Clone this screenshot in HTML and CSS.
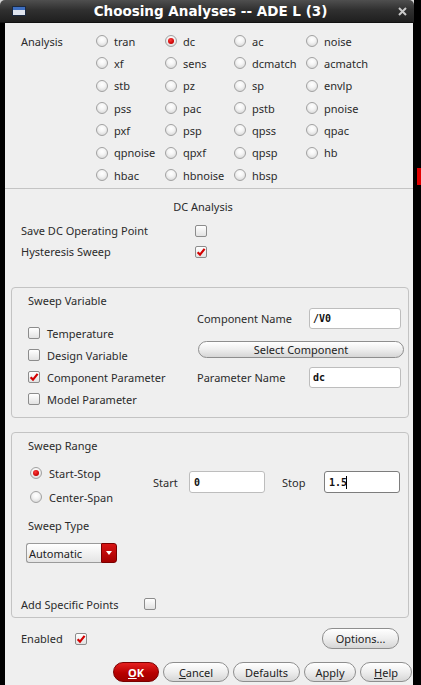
FILE: index.html
```html
<!DOCTYPE html>
<html>
<head>
<meta charset="utf-8">
<link rel="stylesheet" href="styles.css">
</head>
<body>
<div class="screen">
  <div class="title-row">
    <div class="titlebar">
      <span class="win-icon"></span>
      <span class="title">Choosing Analyses -- ADE L (3)</span>
      <svg class="close" width="9" height="9" viewBox="0 0 9 9"><path d="M1 1L8 8M8 1L1 8" stroke="#c9c9c9" stroke-width="2"/></svg>
    </div>
    <div class="title-filler"></div>
  </div>
  <div class="body-row">
    <div class="lstrip"></div>
    <div class="window">
      <div class="analysis">
        <div class="analysis-label">Analysis</div>
        <div class="analysis-grid">
          <label class="radio-item"><span class="radio"></span>tran</label>
          <label class="radio-item"><span class="radio on"></span>dc</label>
          <label class="radio-item"><span class="radio"></span>ac</label>
          <label class="radio-item"><span class="radio"></span>noise</label>
          <label class="radio-item"><span class="radio"></span>xf</label>
          <label class="radio-item"><span class="radio"></span>sens</label>
          <label class="radio-item"><span class="radio"></span>dcmatch</label>
          <label class="radio-item"><span class="radio"></span>acmatch</label>
          <label class="radio-item"><span class="radio"></span>stb</label>
          <label class="radio-item"><span class="radio"></span>pz</label>
          <label class="radio-item"><span class="radio"></span>sp</label>
          <label class="radio-item"><span class="radio"></span>envlp</label>
          <label class="radio-item"><span class="radio"></span>pss</label>
          <label class="radio-item"><span class="radio"></span>pac</label>
          <label class="radio-item"><span class="radio"></span>pstb</label>
          <label class="radio-item"><span class="radio"></span>pnoise</label>
          <label class="radio-item"><span class="radio"></span>pxf</label>
          <label class="radio-item"><span class="radio"></span>psp</label>
          <label class="radio-item"><span class="radio"></span>qpss</label>
          <label class="radio-item"><span class="radio"></span>qpac</label>
          <label class="radio-item"><span class="radio"></span>qpnoise</label>
          <label class="radio-item"><span class="radio"></span>qpxf</label>
          <label class="radio-item"><span class="radio"></span>qpsp</label>
          <label class="radio-item"><span class="radio"></span>hb</label>
          <label class="radio-item"><span class="radio"></span>hbac</label>
          <label class="radio-item"><span class="radio"></span>hbnoise</label>
          <label class="radio-item"><span class="radio"></span>hbsp</label>
        </div>
      </div>
      <div class="sep"></div>
      <div class="dc-title">DC Analysis</div>
      <div class="opt-list">
        <span>Save DC Operating Point</span><span class="cb"></span>
        <span>Hysteresis Sweep</span><span class="cb"><svg viewBox="0 0 10 10"><path d="M1.6 5.2L4 7.6L8.6 1.9" fill="none" stroke="#d40000" stroke-width="2.2"/></svg></span>
      </div>

      <div class="group group-var">
        <div class="gv-left">
          <div class="gtitle">Sweep Variable</div>
          <div class="cb-list">
            <div class="cb-row"><span class="cb"></span>Temperature</div>
            <div class="cb-row"><span class="cb"></span>Design Variable</div>
            <div class="cb-row"><span class="cb"><svg viewBox="0 0 10 10"><path d="M1.6 5.2L4 7.6L8.6 1.9" fill="none" stroke="#d40000" stroke-width="2.2"/></svg></span>Component Parameter</div>
            <div class="cb-row"><span class="cb"></span>Model Parameter</div>
          </div>
        </div>
        <div class="gv-right">
          <div class="field-row"><span class="flabel">Component Name</span><span class="input">/V0</span></div>
          <div class="btn btn-wide">Select Component</div>
          <div class="field-row second"><span class="flabel">Parameter Name</span><span class="input">dc</span></div>
        </div>
      </div>

      <div class="group group-range">
        <div class="gr-title">Sweep Range</div>
        <div class="range-row">
          <div class="radio-col">
            <label class="radio-item"><span class="radio on"></span>Start-Stop</label>
            <label class="radio-item"><span class="radio"></span>Center-Span</label>
          </div>
          <div class="startstop">
            <span class="lbl-start">Start</span>
            <span class="input wide">0</span>
            <span class="lbl-stop">Stop</span>
            <span class="input wide focus">1.5<span class="caret"></span></span>
          </div>
        </div>
        <div class="st-title">Sweep Type</div>
        <div class="combo">
          <span class="combo-main">Automatic</span>
          <span class="combo-arrow"><span class="tri"></span></span>
        </div>
        <div class="add-row"><span>Add Specific Points</span><span class="cb"></span></div>
      </div>

      <div class="enabled-row">
        <span class="en-label">Enabled</span>
        <span class="cb"><svg viewBox="0 0 10 10"><path d="M1.6 5.2L4 7.6L8.6 1.9" fill="none" stroke="#d40000" stroke-width="2.2"/></svg></span>
        <div class="btn btn-options">Options...</div>
      </div>

      <div class="buttons">
        <div class="btn ok"><span class="u">O</span>K</div>
        <div class="btn w-cancel"><span class="u">C</span>ancel</div>
        <div class="btn w-defaults">Defaults</div>
        <div class="btn w-apply">Apply</div>
        <div class="btn w-help"><span class="u">H</span>elp</div>
      </div>
    </div>
    <div class="rstrip"><div class="rmark"></div></div>
  </div>
</div>
</body>
</html>
```

FILE: styles.css
```css
* { box-sizing: border-box; }
html, body { margin: 0; padding: 0; }
body {
  background: #000;
  width: 421px;
  height: 685px;
  overflow: hidden;
  font-family: "Noto Sans", "DejaVu Sans", sans-serif;
  font-size: 11px;
  color: #2b2b2b;
}
.screen { display: flex; flex-direction: column; width: 421px; height: 685px; }

/* title bar */
.title-row { display: flex; height: 23px; background: #d6d6d6; }
.titlebar {
  width: 414px;
  height: 23px;
  display: flex;
  align-items: center;
  padding-left: 12px;
  background: linear-gradient(#4f4f4f, #303030 45%, #1f1f1f);
  border-radius: 5px 5px 0 0;
  border-bottom: 1px solid #111;
}
.win-icon {
  width: 14px;
  height: 10px;
  border: 1px solid #1b2940;
  background: linear-gradient(#3e6fc2 0, #3e6fc2 3px, #dfe4ee 3px);
  flex: none;
}
.title {
  flex: 1;
  text-align: center;
  font-family: "DejaVu Sans", sans-serif;
  font-weight: bold;
  font-size: 13.5px;
  color: #fff;
  padding-right: 3px;
}
.close { flex: none; margin-right: 7px; }
.title-filler { flex: 1; background: #000; }

.body-row { display: flex; flex: 1; }
.lstrip { width: 5px; background: #000; }
.window { width: 408px; background: #efefef; display: flex; flex-direction: column; }
.rstrip { flex: 1; background: #000; padding-top: 145px; }
.rmark { width: 4px; height: 17px; margin-left: 4px; background: #e00000; }

/* analysis radios */
.analysis { display: flex; height: 165px; padding: 7px 0 0 16px; }
.analysis-label { width: 75px; height: 22.33px; display: flex; align-items: center; }
.analysis-grid {
  display: grid;
  grid-template-columns: 69px 69px 72px 1fr;
  grid-auto-rows: 22.33px;
}
.radio-item { display: flex; align-items: center; gap: 6px; white-space: nowrap; }
.radio {
  width: 12px;
  height: 12px;
  flex: none;
  border-radius: 50%;
  border: 1px solid #a2a2a2;
  background: radial-gradient(circle at 50% 35%, #ffffff 0, #f4f4f4 40%, #cfcfcf 100%);
  display: flex;
  align-items: center;
  justify-content: center;
}
.radio.on::after {
  content: "";
  width: 6px;
  height: 6px;
  border-radius: 50%;
  background: radial-gradient(circle at 40% 35%, #ff3a3a, #c40000 70%);
}

.sep { height: 1px; background: #c4c4c4; }
.dc-title { height: 22px; margin-top: 6px; display: flex; align-items: center; justify-content: center; padding-right: 12px; }
.opt-list {
  margin-top: 3px;
  padding-left: 16px;
  display: grid;
  grid-template-columns: 174px 12px;
  grid-auto-rows: 21px;
  align-items: center;
}
.cb {
  width: 12px;
  height: 12px;
  flex: none;
  border: 1px solid #8c8c8c;
  border-radius: 2px;
  background: linear-gradient(#ffffff, #e2e2e2);
  display: flex;
  align-items: center;
  justify-content: center;
}
.cb svg { width: 10px; height: 10px; }

/* groups */
.group { margin: 25px 4px 0 6px; border: 1px solid #c3c3c3; border-radius: 4px; }
.group-var {
  height: 131px;
  display: grid;
  grid-template-columns: 169px 207px;
  padding-left: 16px;
}
.gtitle { margin-top: 5px; height: 16px; line-height: 16px; }
.cb-list { margin-top: 13px; display: flex; flex-direction: column; }
.cb-row { height: 22px; display: flex; align-items: center; gap: 7px; }
.gv-right { padding-top: 20px; display: flex; flex-direction: column; }
.field-row { display: flex; align-items: center; height: 21px; }
.field-row.second { margin-top: 9px; }
.flabel { width: 112px; }
.input {
  width: 92px;
  height: 21px;
  background: #fff;
  border: 1px solid #bdbdbd;
  border-radius: 3px;
  font-family: "DejaVu Sans Mono", monospace;
  font-weight: bold;
  font-size: 10px;
  color: #111;
  padding-left: 3px;
  display: flex;
  align-items: center;
}
.input.wide { width: 76px; height: 22px; padding-left: 4px; }
.input.focus { border-color: #7d7d7d; }
.caret { width: 1px; height: 13px; background: #000; margin-left: -1px; }

.btn {
  height: 20px;
  border: 1px solid #8e8e8e;
  border-radius: 10px;
  background: linear-gradient(#ffffff, #eeeeee 50%, #d6d6d6);
  display: flex;
  align-items: center;
  justify-content: center;
  color: #222;
  white-space: nowrap;
}
.btn-wide { margin: 12px 0 0 1px; height: 17px; width: 206px; }

.group-range { margin-top: 14px; height: 186px; }
.gr-title { margin: 5px 0 0 16px; height: 16px; line-height: 16px; }
.range-row { display: flex; margin-top: 7px; }
.radio-col { width: 141px; padding-left: 18px; display: flex; flex-direction: column; }
.radio-col .radio-item { height: 24px; gap: 7px; }
.startstop { display: flex; align-items: center; margin-top: 10px; height: 22px; }
.lbl-start { width: 36px; }
.lbl-stop { margin-left: 17px; width: 42px; }
.st-title { margin: 9px 0 0 16px; height: 16px; line-height: 16px; }
.combo { margin: 9px 0 0 14px; width: 91px; height: 20px; display: flex; }
.combo-main {
  flex: 1;
  border: 1px solid #9a9a9a;
  border-right: none;
  border-radius: 3px 0 0 3px;
  background: linear-gradient(#ffffff, #e4e4e4);
  padding-left: 2px;
  display: flex;
  align-items: center;
  color: #222;
}
.combo-arrow {
  width: 16px;
  background: linear-gradient(#d81414, #a50000);
  border: 1px solid #7a0000;
  border-radius: 0 3px 3px 0;
  display: flex;
  align-items: center;
  justify-content: center;
}
.tri { width: 0; height: 0; border-left: 3.5px solid transparent; border-right: 3.5px solid transparent; border-top: 4px solid #fff; }
.add-row {
  margin: 33px 0 0 9px;
  display: grid;
  grid-template-columns: 123px 12px;
  height: 16px;
  align-items: center;
}

.enabled-row { display: flex; align-items: center; margin-top: 10px; height: 21px; padding-left: 16px; }
.en-label { width: 54px; }
.btn-options { margin-left: auto; margin-right: 14px; width: 77px; height: 21px; }

.buttons { display: flex; justify-content: flex-end; gap: 4px; margin-top: 13px; padding-right: 1px; }
.buttons .btn { height: 20px; }
.ok {
  width: 46px;
  background: linear-gradient(#e52020, #b80000 55%, #9e0000);
  border-color: #7a0000;
  color: #fff;
  font-weight: bold;
}
.w-cancel { width: 66px; }
.w-defaults { width: 67px; }
.w-apply { width: 52px; }
.w-help { width: 52px; }
.u { text-decoration: underline; }
```
